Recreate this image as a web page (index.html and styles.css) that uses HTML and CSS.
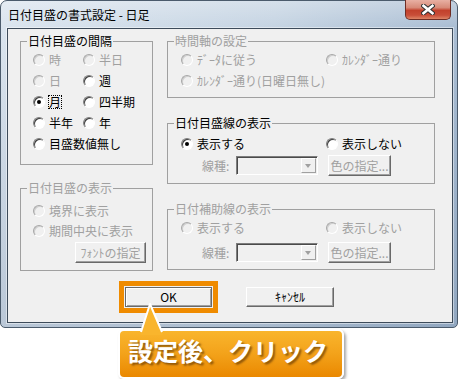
FILE: index.html
```html
<!DOCTYPE html>
<html lang="ja">
<head>
    <meta charset="UTF-8">
    <title>日付目盛の書式設定 - 日足</title>
    <link rel="stylesheet" href="styles.css">
</head>
<body>
    <div class="window">
        <div class="titlebar">
            <span class="title">日付目盛の書式設定 - 日足</span>
            <div class="close">
                <svg width="14" height="11" viewBox="0 0 14 11">
                    <path d="M2.5 1.8 L11.5 9.2 M11.5 1.8 L2.5 9.2" stroke="#2e2e2e" stroke-width="4.6" stroke-linecap="square"/>
                    <path d="M2.5 1.8 L11.5 9.2 M11.5 1.8 L2.5 9.2" stroke="#fff" stroke-width="2.6" stroke-linecap="square"/>
                </svg>
            </div>
        </div>
        <div class="frame">
            <div class="client">
                <div class="columns">
                    <div class="col left">
                        <fieldset class="group interval">
                            <legend>日付目盛の間隔</legend>
                            <div class="body">
                                <div class="opt off"><span class="radio"></span>時</div>
                                <div class="opt off"><span class="radio"></span>半日</div>
                                <div class="opt off"><span class="radio"></span>日</div>
                                <div class="opt"><span class="radio"></span>週</div>
                                <div class="opt on"><span class="radio"></span><span class="focus">月</span></div>
                                <div class="opt"><span class="radio"></span>四半期</div>
                                <div class="opt"><span class="radio"></span>半年</div>
                                <div class="opt"><span class="radio"></span>年</div>
                                <div class="opt wide"><span class="radio"></span>目盛数値無し</div>
                            </div>
                        </fieldset>
                        <fieldset class="group dim labelpos">
                            <legend>日付目盛の表示</legend>
                            <div class="body">
                                <div class="opt off"><span class="radio"></span>境界に表示</div>
                                <div class="opt off"><span class="radio"></span>期間中央に表示</div>
                                <div class="btn-line">
                                    <div class="btn dis font-btn">ﾌｫﾝﾄの指定</div>
                                </div>
                            </div>
                        </fieldset>
                    </div>
                    <div class="col right">
                        <fieldset class="group dim axis">
                            <legend>時間軸の設定</legend>
                            <div class="body">
                                <div class="pair">
                                    <div class="opt off"><span class="radio"></span>ﾃﾞｰﾀに従う</div>
                                    <div class="opt off"><span class="radio"></span>ｶﾚﾝﾀﾞｰ通り</div>
                                </div>
                                <div class="opt off"><span class="radio"></span>ｶﾚﾝﾀﾞｰ通り(日曜日無し)</div>
                            </div>
                        </fieldset>
                        <fieldset class="group gridline">
                            <legend>日付目盛線の表示</legend>
                            <div class="body">
                                <div class="pair">
                                    <div class="opt on"><span class="radio"></span>表示する</div>
                                    <div class="opt"><span class="radio"></span>表示しない</div>
                                </div>
                                <div class="line-row">
                                    <span class="line-label">線種:</span>
                                    <div class="combo"><span class="combo-btn"></span></div>
                                    <div class="btn dis color-btn">色の指定...</div>
                                </div>
                            </div>
                        </fieldset>
                        <fieldset class="group dim subline">
                            <legend>日付補助線の表示</legend>
                            <div class="body">
                                <div class="pair">
                                    <div class="opt off"><span class="radio"></span>表示する</div>
                                    <div class="opt off"><span class="radio"></span>表示しない</div>
                                </div>
                                <div class="line-row">
                                    <span class="line-label">線種:</span>
                                    <div class="combo"><span class="combo-btn"></span></div>
                                    <div class="btn dis color-btn">色の指定...</div>
                                </div>
                            </div>
                        </fieldset>
                    </div>
                </div>
                <div class="actions">
                    <div class="btn ok">OK</div>
                    <div class="btn cancel">ｷｬﾝｾﾙ</div>
                </div>
            </div>
        </div>
    </div>

    <div class="callout">
        <svg class="pointer" width="28" height="34" viewBox="0 0 28 34">
            <polygon points="12,3 3,31 2,34 25,34 24,31" fill="#f9b52d"/>
            <polyline points="3,31 12,3 24,31" fill="none" stroke="#fff" stroke-width="2" stroke-linejoin="round"/>
        </svg>
        設定後、クリック
    </div>
</body>
</html>
```

FILE: styles.css
```css
body {
    margin: 0;
    background: #fff;
    font-family: "Noto Sans CJK JP", sans-serif;
    font-size: 12px;
    line-height: 14px;
    color: #000;
}
.window {
    width: 458px;
    height: 328px;
    box-sizing: border-box;
    border: 1px solid #4b5b6c;
    border-radius: 7px 7px 5px 5px;
    background:
        linear-gradient(180deg, rgba(255, 255, 255, 0.3), rgba(255, 255, 255, 0) 28px, rgba(40, 70, 110, 0.18)),
        linear-gradient(to right, #dae4ee, #c4d3e2 60%, #a8bcd2);
    display: flex;
    flex-direction: column;
}
.titlebar {
    height: 27px;
    flex: none;
    display: flex;
    align-items: center;
    padding-left: 7px;
}
.title {
    color: #000;
}
.close {
    align-self: flex-start;
    margin: -1px 6px 0 auto;
    width: 46px;
    height: 20px;
    box-sizing: border-box;
    border: 1px solid #6e2d24;
    border-top: none;
    border-radius: 0 0 5px 5px;
    background: linear-gradient(#e8b0a3, #d78a78 40%, #c2412c 55%, #c84e38 80%, #de8566);
    display: flex;
    align-items: center;
    justify-content: center;
}
.frame {
    flex: 1;
    display: flex;
    padding: 0 4px 4px 6px;
}
.client {
    flex: 1;
    border: 1px solid #3d4b5a;
    background: #f0f0f0;
    box-shadow: 0 0 0 1px rgba(255, 255, 255, 0.45);
}
.columns {
    display: flex;
    align-items: flex-start;
    gap: 14px;
    padding-left: 12px;
}
.col {
    display: flex;
    flex-direction: column;
    padding-top: 5px;
}
.left {
    width: 133px;
}
.right {
    width: 268px;
}
.group {
    margin: 0;
    padding: 0;
    min-width: 0;
    border: 1px solid #a0a0a0;
}
.group legend {
    margin-left: 6px;
    padding: 0 1px;
    line-height: 14px;
}
.dim legend {
    color: #a0a0a0;
}

/* radio buttons */
.opt {
    display: flex;
    align-items: center;
    white-space: nowrap;
}
.off {
    color: #a0a0a0;
}
.radio {
    position: relative;
    flex: none;
    width: 12px;
    height: 12px;
    box-sizing: border-box;
    margin-right: 4px;
    border-radius: 50%;
    border: 1px solid;
    border-color: #7d7d7d #fff #fff #7d7d7d;
    background: #fff;
    box-shadow: inset 1px 1px 0 #3f3f3f;
}
.off .radio {
    background: #f0f0f0;
    border-color: #a8a8a8 #fff #fff #a8a8a8;
    box-shadow: inset 1px 1px 0 #cfcfcf;
}
.on .radio::after {
    content: "";
    position: absolute;
    left: 3px;
    top: 3px;
    width: 4px;
    height: 4px;
    border-radius: 50%;
    background: #000;
}
.focus {
    margin-left: -1px;
    border: 1px dotted #000;
    line-height: 12px;
}

/* groups */
.interval .body {
    display: grid;
    grid-template-columns: 50px auto;
    grid-auto-rows: 21px;
    padding: 1px 0 10px 12px;
}
.wide {
    grid-column: span 2;
}
.labelpos {
    margin-top: 16px;
}
.labelpos .body {
    padding: 6px 6px 7px 12px;
}
.labelpos .opt {
    height: 20px;
}
.btn-line {
    display: flex;
    justify-content: flex-end;
    margin-top: 1px;
}
.axis .body {
    padding: 1px 0 6px 13px;
}
.axis .opt {
    height: 21px;
}
.pair {
    display: flex;
}
.pair .opt:first-child {
    width: 145px;
}
.gridline {
    margin-top: 18px;
}
.gridline .body {
    padding: 3px 0 7px 13px;
}
.gridline .opt {
    height: 21px;
}
.gridline .line-row {
    margin-top: 1px;
}
.subline {
    margin-top: 18px;
}
.subline .body {
    padding: 2px 0 6px 13px;
}
.subline .opt {
    height: 20px;
}
.subline .line-row {
    margin-top: 4px;
}
.line-row {
    display: flex;
    align-items: center;
    height: 21px;
    padding-left: 21px;
}
.line-label {
    width: 34px;
    color: #a0a0a0;
}
.combo {
    width: 82px;
    height: 19px;
    box-sizing: border-box;
    margin-right: 10px;
    padding: 1px;
    display: flex;
    justify-content: flex-end;
    border: 1px solid;
    border-color: #7d7d7d #fff #fff #7d7d7d;
    box-shadow: inset 1px 1px 0 #4a4a4a;
    background: #f0f0f0;
}
.combo-btn {
    position: relative;
    width: 15px;
    box-sizing: border-box;
    border: 1px solid;
    border-color: #fff #a0a0a0 #a0a0a0 #fff;
    background: #f0f0f0;
}
.combo-btn::after {
    content: "";
    position: absolute;
    left: 3px;
    top: 5px;
    border-left: 3.5px solid transparent;
    border-right: 3.5px solid transparent;
    border-top: 4px solid #a0a0a0;
}

/* push buttons */
.btn {
    box-sizing: border-box;
    height: 21px;
    display: flex;
    align-items: center;
    justify-content: center;
    background: #f0f0f0;
    border: 1px solid;
    border-color: #fff #696969 #696969 #fff;
    box-shadow: inset -1px -1px 0 #a0a0a0;
    white-space: nowrap;
}
.dis {
    color: #a0a0a0;
}
.font-btn {
    width: 71px;
}
.color-btn {
    width: 63px;
}
.actions {
    display: flex;
    gap: 34px;
    margin-top: 16px;
    padding-left: 117px;
}
.actions .btn {
    height: 20px;
}
.ok {
    width: 87px;
    border-color: #696969;
    box-shadow: inset 1px 1px 0 #fff, inset -1px -1px 0 #a0a0a0;
    outline: 5px solid #ef8b00;
    outline-offset: 1px;
}
.cancel {
    width: 88px;
}

/* callout */
.callout {
    position: relative;
    width: 226px;
    height: 50px;
    box-sizing: border-box;
    margin: 1px 0 0 118px;
    padding: 0 0 8px 8px;
    display: flex;
    align-items: center;
    border: 2px solid #fff;
    border-radius: 6px;
    background: linear-gradient(#f9b52d, #f3a21a 50%, #ea8800);
    box-shadow: 2px 2px 3px rgba(0, 0, 0, 0.35);
    color: #fff;
    font-size: 25px;
    font-weight: bold;
    line-height: 30px;
    text-shadow: 2px 2px 2px rgba(70, 35, 0, 0.55);
}
.pointer {
    position: absolute;
    left: 18px;
    top: -30px;
}
```
